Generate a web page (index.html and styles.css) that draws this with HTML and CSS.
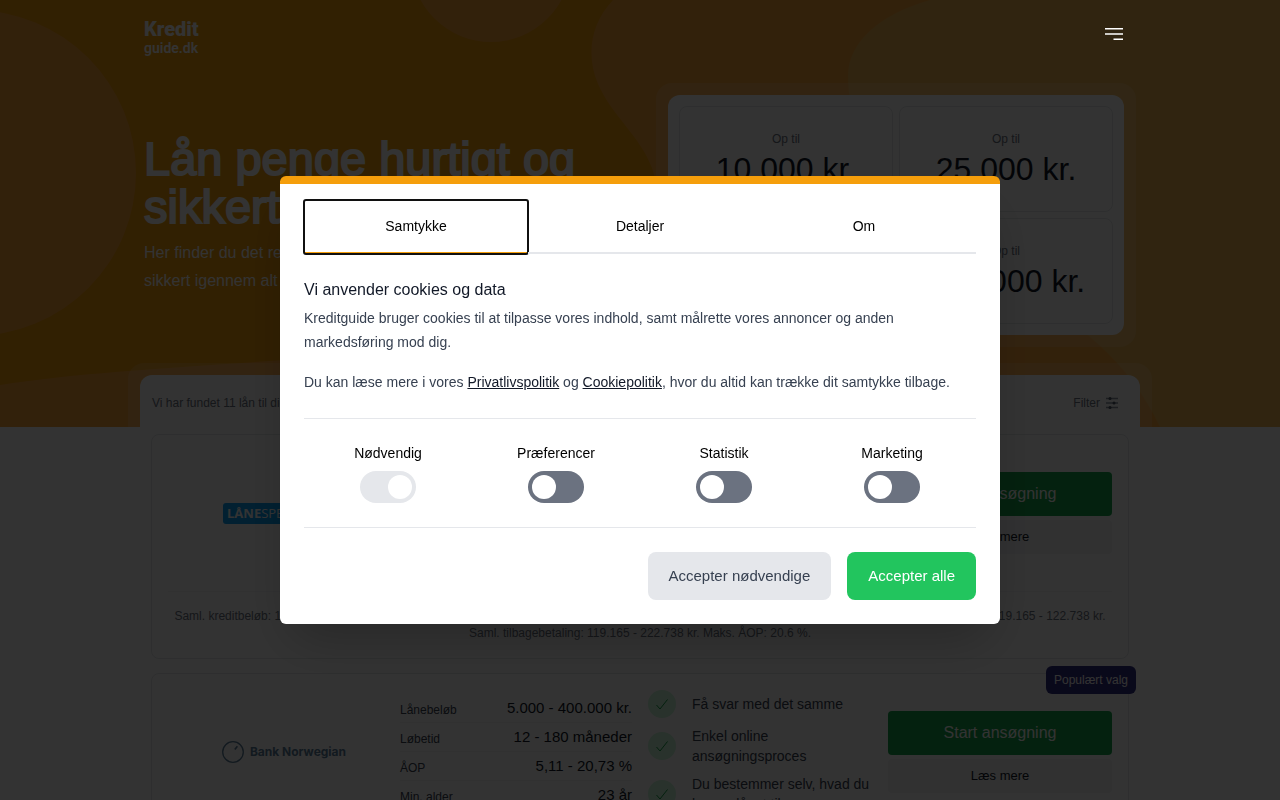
FILE: index.html
```html
<!DOCTYPE html>
<html lang="da">
<head>
<meta charset="utf-8">
<meta name="viewport" content="width=device-width, initial-scale=1">
<title>Kreditguide.dk</title>
<link rel="stylesheet" href="styles.css">
</head>
<body>
<section class="hero">
  <svg class="blobs" viewBox="0 0 1280 427" preserveAspectRatio="none" aria-hidden="true">
    <g fill="#fba53a">
      <circle cx="-27" cy="173" r="163"/>
      <circle cx="491" cy="-38" r="80"/>
      <path d="M613 0C590 24 586 56 598 84C612 116 640 136 652 168C672 226 640 300 520 332C400 362 140 362 0 385V427H1280V0Z"/>
      <path d="M930 0C880 14 848 42 848 76C848 130 880 200 960 250C1040 300 1120 340 1160 427H1280V0Z" fill="#f0b450"/>
    </g>
  </svg>
  <div class="hero-inner">
    <header class="nav">
      <a class="brand" href="#"><span class="brand-top">Kredit</span><span class="brand-sub">guide.dk</span></a>
      <button class="menu" type="button" aria-label="Menu">
        <svg width="24" height="24" viewBox="0 0 24 24" fill="none" stroke="#fff" stroke-width="1.5"><path d="M3 6.75h18M3 12h18M11.5 17.25H21"/></svg>
      </button>
    </header>
    <div class="intro">
      <div class="intro-text">
        <h1>Lån penge hurtigt og sikkert</h1>
        <p>Her finder du det rette lån, og vi guider dig sikkert igennem alt</p>
      </div>
      <div class="amounts-frame">
        <div class="amounts">
          <a class="amount" href="#"><small>Op til</small><span>10.000 kr.</span></a>
          <a class="amount" href="#"><small>Op til</small><span>25.000 kr.</span></a>
          <a class="amount" href="#"><small>Op til</small><span>50.000 kr.</span></a>
          <a class="amount" href="#"><small>Op til</small><span>100.000 kr.</span></a>
        </div>
      </div>
    </div>
    <div class="results-frame">
      <div class="results-head">
        <span>Vi har fundet 11 lån til dig</span>
        <button class="filter" type="button">Filter
          <svg width="12" height="12" viewBox="0 0 12 12" stroke="#8b93a0" stroke-width="1.4" fill="#4b5563"><path d="M0 1.5h12M0 6h12M0 10.5h12"/><g stroke="none"><circle cx="4" cy="1.5" r="1.5"/><circle cx="8" cy="6" r="1.5"/><circle cx="4" cy="10.5" r="1.5"/></g></svg>
        </button>
      </div>
    </div>
  </div>
</section>

<main class="loans">
  <article class="loan">
    <div class="loan-row">
      <div class="loan-logo"><span class="lane"><b>LÅNE</b>SPEKTER</span></div>
      <div class="loan-actions">
        <button class="start" type="button">Start ansøgning</button>
        <button class="more" type="button">Læs mere</button>
      </div>
    </div>
    <p class="terms">Saml. kreditbeløb: 100.000 kr. Løbetid: 12 - 180 måneder. Fast månedlig ydelse. Debitorrente: 4,9 - 19,4 %. Etableringsomk.: 0 kr. Saml. kreditomkostning: 19.165 - 122.738 kr.<br>Saml. tilbagebetaling: 119.165 - 222.738 kr. Maks. ÅOP: 20.6 %.</p>
  </article>

  <article class="loan">
    <span class="badge">Populært valg</span>
    <div class="loan-row">
      <div class="loan-logo">
        <span class="norwegian">
          <svg width="22" height="22" viewBox="0 0 22 22" fill="none" stroke="currentColor"><circle cx="11" cy="11" r="10.3" stroke-width="1.3"/><path d="M12.8 8.6L15.4 5.2" stroke-width="1.6"/></svg>
          Bank Norwegian
        </span>
      </div>
      <dl class="facts">
        <div><dt>Lånebeløb</dt><dd>5.000 - 400.000 kr.</dd></div>
        <div><dt>Løbetid</dt><dd>12 - 180 måneder</dd></div>
        <div><dt>ÅOP</dt><dd>5,11 - 20,73 %</dd></div>
        <div><dt>Min. alder</dt><dd>23 år</dd></div>
      </dl>
      <ul class="perks">
        <li><svg viewBox="0 0 28 28"><path d="M8.5 15l3.5 4 7.5-9.5"/></svg><span>Få svar med det samme</span></li>
        <li><svg viewBox="0 0 28 28"><path d="M8.5 15l3.5 4 7.5-9.5"/></svg><span>Enkel online ansøgningsproces</span></li>
        <li><svg viewBox="0 0 28 28"><path d="M8.5 15l3.5 4 7.5-9.5"/></svg><span>Du bestemmer selv, hvad du bruger lånet til</span></li>
      </ul>
      <div class="loan-actions">
        <button class="start" type="button">Start ansøgning</button>
        <button class="more" type="button">Læs mere</button>
      </div>
    </div>
  </article>
</main>

<div class="overlay">
  <div class="dialog" role="dialog" aria-modal="true" aria-labelledby="cookie-title">
    <div class="tabs" role="tablist">
      <button class="tab tab-active" type="button" role="tab" aria-selected="true">Samtykke</button>
      <button class="tab" type="button" role="tab" aria-selected="false">Detaljer</button>
      <button class="tab" type="button" role="tab" aria-selected="false">Om</button>
    </div>
    <div class="copy">
      <h2 id="cookie-title">Vi anvender cookies og data</h2>
      <p>Kreditguide bruger cookies til at tilpasse vores indhold, samt målrette vores annoncer og anden markedsføring mod dig.</p>
      <p>Du kan læse mere i vores <a href="#">Privatlivspolitik</a> og <a href="#">Cookiepolitik</a>, hvor du altid kan trække dit samtykke tilbage.</p>
    </div>
    <div class="choices">
      <label class="choice">Nødvendig<input type="checkbox" checked disabled></label>
      <label class="choice">Præferencer<input type="checkbox"></label>
      <label class="choice">Statistik<input type="checkbox"></label>
      <label class="choice">Marketing<input type="checkbox"></label>
    </div>
    <div class="actions">
      <button class="btn btn-plain" type="button">Accepter nødvendige</button>
      <button class="btn btn-primary" type="button">Accepter alle</button>
    </div>
  </div>
</div>
</body>
</html>
```

FILE: styles.css
```css
* { box-sizing: border-box; }
html, body { margin: 0; height: 100%; overflow: hidden; }
body {
  font-family: "Liberation Sans", Arial, sans-serif;
  font-size: 14px;
  line-height: 20px;
  color: #111827;
  background: #fff;
}
h1, h2, p, dl, dd, ul { margin: 0; padding: 0; font-weight: 400; }
button { font: inherit; color: inherit; border: 0; background: none; padding: 0; cursor: pointer; }
a { color: inherit; text-decoration: none; }

.hero { position: relative; background: #f59e0b; }
.blobs { position: absolute; inset: 0; width: 100%; height: 100%; }
.hero-inner { position: relative; max-width: 1024px; margin: 0 auto; }

.nav { display: flex; justify-content: space-between; align-items: flex-start; padding: 18px 16px 27px; }
.brand { display: flex; flex-direction: column; color: #fff; font-family: Roboto, sans-serif; }
.brand-top { font-size: 20px; line-height: 22px; font-weight: 900; }
.brand-sub { font-size: 14px; line-height: 16px; font-weight: 600; }
.menu { position: relative; z-index: 60; padding: 4px 10px; line-height: 0; }

.intro { display: flex; justify-content: space-between; align-items: center; padding: 0 16px; }
.intro-text { width: 480px; color: #fff; }
.intro h1 { font-size: 47px; line-height: 48px; -webkit-text-stroke: 2px #fff; margin-bottom: 8px; }
.intro p { font-size: 16px; line-height: 28px; width: 340px; }
.amounts-frame { flex: 0 0 480px; padding: 12px; border-radius: 16px; background: rgba(255, 255, 255, .14); }
.amounts { display: grid; grid-template-columns: 1fr 1fr; gap: 6px; padding: 11px; border-radius: 12px; background: #fff; }
.amount {
  display: flex; flex-direction: column; align-items: center; justify-content: center;
  min-height: 106px; border: 1px solid #e5e7eb; border-radius: 8px;
}
.amount small { font-size: 12px; line-height: 20px; color: #6b7280; }
.amount span { font-size: 32px; line-height: 40px; }

.results-frame { margin-top: 16px; padding: 12px 12px 0; border-radius: 16px 16px 0 0; background: rgba(255, 255, 255, .14); }
.results-head {
  display: flex; justify-content: space-between; padding: 16px 22px 12px 12px;
  border-radius: 12px 12px 0 0; background: #fff; font-size: 12px; line-height: 24px; color: #6b7280;
}
.filter { display: flex; align-items: center; gap: 6px; }

.loans { display: flex; flex-direction: column; gap: 14px; max-width: 1000px; margin: 0 auto; padding: 7px 11px; }
.loan { position: relative; padding: 16px; border: 1px solid #e5e7eb; border-radius: 8px; }
.loan-row { display: flex; align-items: center; min-height: 124px; }
.loan-logo { flex: 0 0 232px; display: flex; justify-content: center; }
.lane {
  padding: 0 4px; border-radius: 3px; background: #0aa0f5; color: #fff;
  width: 122px; white-space: nowrap; overflow: hidden;
  font-family: "Open Sans", sans-serif; font-size: 13px; line-height: 21px;
}
.norwegian { display: flex; align-items: center; gap: 6px; white-space: nowrap; color: #5c7f9c; font-family: Inter, sans-serif; font-size: 12px; font-weight: 700; }
.facts { flex: 1 1 232px; }
.facts div { display: flex; justify-content: space-between; align-items: flex-end; border-bottom: 1px solid #f3f4f6; padding: 4px 0; }
.facts div:last-child { border-color: transparent; }
.facts dt { font-size: 12px; line-height: 16px; color: #374151; }
.facts dd { font-size: 15px; }
.perks { flex: 0 0 224px; margin-left: 16px; display: flex; flex-direction: column; gap: 8px; list-style: none; color: #374151; }
.perks li { display: flex; align-items: center; gap: 16px; min-height: 28px; }
.perks svg { flex: none; width: 28px; height: 28px; border-radius: 50%; background: #ccf8da; fill: none; stroke: #16a34a; stroke-width: 1; }
.loan-actions { flex: 0 0 224px; margin-left: auto; display: flex; flex-direction: column; gap: 4px; }
.perks + .loan-actions { margin-left: 16px; }
.start { height: 44px; border-radius: 4px; background: #16a34a; color: #fff; font-size: 16px; }
.more { height: 34px; border-radius: 4px; background: #f3f4f6; font-size: 13px; }
.terms { margin-top: 16px; padding-top: 16px; border-top: 1px solid #f3f4f6; text-align: center; font-size: 12px; line-height: 17px; color: #6b7280; white-space: nowrap; }
.badge { position: absolute; top: -8px; right: -8px; padding: 4px 8px; border-radius: 6px; background: #312e81; color: #fff; font-size: 12px; }

.overlay { position: fixed; inset: 0; z-index: 50; display: flex; align-items: center; justify-content: center; background: rgba(0, 0, 0, .8); }
.dialog {
  width: 720px; max-width: 100%; padding: 16px 24px 24px; border-top: 8px solid #f59e0b;
  border-radius: 6px; background: #fff; box-shadow: 0 25px 50px -12px rgba(0, 0, 0, .25);
}
.tabs { display: grid; grid-template-columns: repeat(3, 1fr); }
.tab { padding: 16px 0; border-bottom: 2px solid #e5e7eb; color: #000; }
.tab-active { border-color: #f59e0b; border-radius: 2px; outline: 2px solid #101010; outline-offset: -1px; }
.copy { padding: 24px 0; border-bottom: 1px solid #e5e7eb; color: #374151; line-height: 24px; }
.copy h2 { font-size: 16px; color: #111827; margin-bottom: 4px; }
.copy p + p { margin-top: 16px; }
.copy a { color: #111827; text-decoration: underline; }
.choices { display: grid; grid-template-columns: repeat(4, 1fr); padding: 24px 0; border-bottom: 1px solid #e5e7eb; }
.choice { display: flex; flex-direction: column; align-items: center; gap: 8px; color: #000; }
.choice input { appearance: none; display: flex; width: 56px; height: 32px; margin: 0; padding: 4px; border-radius: 16px; background: #6b7280; }
.choice input::before { content: ""; width: 24px; height: 24px; border-radius: 50%; background: #fff; }
.choice input:checked { justify-content: flex-end; }
.choice input:disabled { background: #e5e7eb; }
.actions { display: flex; justify-content: flex-end; gap: 16px; padding-top: 24px; }
.btn { height: 48px; padding: 0 21px; border-radius: 8px; font-size: 15px; }
.btn-plain { background: #e5e7eb; color: #374151; }
.btn-primary { background: #22c55e; color: #fff; }
```
